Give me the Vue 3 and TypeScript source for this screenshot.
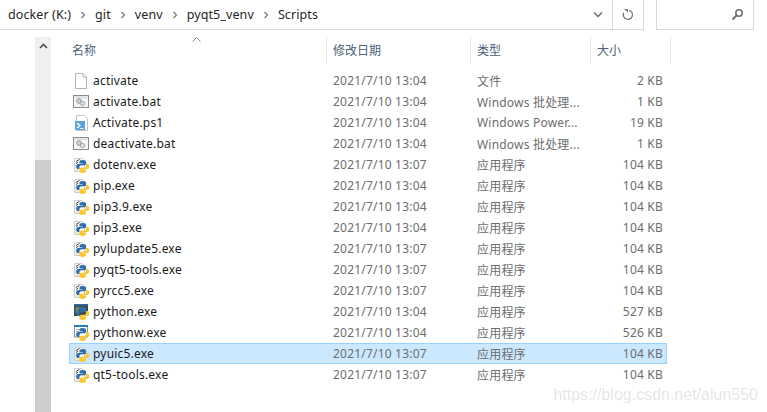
<script setup lang="ts">
type Kind = 'file' | 'bat' | 'ps1' | 'py' | 'python' | 'pythonw'

interface Row {
  name: string
  date: string
  type: string
  size: string
  kind: Kind
  selected?: boolean
}

const crumbs = ['docker (K:)', 'git', 'venv', 'pyqt5_venv', 'Scripts']

const rows: Row[] = [
  { name: 'activate', date: '2021/7/10 13:04', type: '文件', size: '2 KB', kind: 'file' },
  { name: 'activate.bat', date: '2021/7/10 13:04', type: 'Windows 批处理...', size: '1 KB', kind: 'bat' },
  { name: 'Activate.ps1', date: '2021/7/10 13:04', type: 'Windows Power...', size: '19 KB', kind: 'ps1' },
  { name: 'deactivate.bat', date: '2021/7/10 13:04', type: 'Windows 批处理...', size: '1 KB', kind: 'bat' },
  { name: 'dotenv.exe', date: '2021/7/10 13:07', type: '应用程序', size: '104 KB', kind: 'py' },
  { name: 'pip.exe', date: '2021/7/10 13:04', type: '应用程序', size: '104 KB', kind: 'py' },
  { name: 'pip3.9.exe', date: '2021/7/10 13:04', type: '应用程序', size: '104 KB', kind: 'py' },
  { name: 'pip3.exe', date: '2021/7/10 13:04', type: '应用程序', size: '104 KB', kind: 'py' },
  { name: 'pylupdate5.exe', date: '2021/7/10 13:07', type: '应用程序', size: '104 KB', kind: 'py' },
  { name: 'pyqt5-tools.exe', date: '2021/7/10 13:07', type: '应用程序', size: '104 KB', kind: 'py' },
  { name: 'pyrcc5.exe', date: '2021/7/10 13:07', type: '应用程序', size: '104 KB', kind: 'py' },
  { name: 'python.exe', date: '2021/7/10 13:04', type: '应用程序', size: '527 KB', kind: 'python' },
  { name: 'pythonw.exe', date: '2021/7/10 13:04', type: '应用程序', size: '526 KB', kind: 'pythonw' },
  { name: 'pyuic5.exe', date: '2021/7/10 13:07', type: '应用程序', size: '104 KB', kind: 'py', selected: true },
  { name: 'qt5-tools.exe', date: '2021/7/10 13:07', type: '应用程序', size: '104 KB', kind: 'py' },
]

const snake = 'M12 .5c-4.500 0-5.800 1.400-5.800 3.400v2.800H12v.9H4c-2.300 0-3.700 1.800-3.700 4.400s1.400 4.600 3.700 4.600h2.100v-3.100c0-2 1.700-3.700 3.800-3.700h5c1.800 0 3.200-1.500 3.200-3.200V3.900C18.100 2 16 .5 12 .5z'
</script>

<template>
  <div class="window">
    <div class="toolbar">
      <div class="address">
        <div class="crumbs">
          <template v-for="(crumb, i) in crumbs" :key="crumb">
            <span>{{ crumb }}</span>
            <svg v-if="i < crumbs.length - 1" class="sep" width="6" height="8" viewBox="0 0 6 8">
              <path d="M1.500 1l3 3-3 3" fill="none" stroke="#777" stroke-width="1.200" />
            </svg>
          </template>
        </div>
        <svg class="drop" width="10" height="7" viewBox="0 0 10 7">
          <path d="M1 1.500l4 4 4-4" fill="none" stroke="#6d6d6d" stroke-width="1.500" />
        </svg>
        <div class="refresh">
          <svg width="12" height="13" viewBox="0 0 12 13">
            <path d="M3 3.200A4.600 4.600 0 1 0 9 3.200" fill="none" stroke="#777" stroke-width="1.300" transform="rotate(-25 6 7)" />
            <path d="M2 1h4v3.600z" fill="#777" />
          </svg>
        </div>
      </div>
      <div class="search">
        <svg width="13" height="13" viewBox="0 0 13 13">
          <circle cx="8" cy="5" r="3.200" fill="none" stroke="#6d6d6d" stroke-width="1.500" />
          <path d="M5.600 7.400L1.500 11.500" stroke="#6d6d6d" stroke-width="2" />
        </svg>
      </div>
    </div>

    <div class="body">
      <div class="scrollbar">
        <svg class="up" width="9" height="6" viewBox="0 0 9 6">
          <path d="M1 5l3.500-3.500L8 5" fill="none" stroke="#505050" stroke-width="1.700" />
        </svg>
        <div class="thumb"></div>
      </div>

      <div class="list">
        <div class="head">
          <svg class="sort" width="9" height="5" viewBox="0 0 9 5">
            <path d="M.5 4.500l4-4 4 4" fill="none" stroke="#8a8a8a" />
          </svg>
          <div class="hcell c-name">名称</div>
          <div class="hcell c-date">修改日期</div>
          <div class="hcell c-type">类型</div>
          <div class="hcell c-size">大小</div>
        </div>

        <div class="rows">
          <div v-for="row in rows" :key="row.name" class="row" :class="{ selected: row.selected }">
            <div class="cell c-name name">
              <svg class="icon" width="16" height="16" viewBox="0 0 16 16">
                <template v-if="row.kind === 'file'">
                  <path d="M2.500.5h7.500l3.500 3.500v11.500h-11z" fill="#fff" stroke="#b4b4b4" />
                  <path d="M10 .5v3.500h3.500" fill="#f2f2f2" stroke="#b4b4b4" />
                </template>
                <template v-else-if="row.kind === 'bat'">
                  <rect x=".5" y="1.500" width="15" height="12" fill="#f4f4f4" stroke="#8c8c8c" />
                  <rect x="1.500" y="2.500" width="13" height="1.500" fill="#dcdcdc" />
                  <circle cx="6" cy="7" r="2.300" fill="#cfd4da" stroke="#8f98a3" />
                  <circle cx="9.500" cy="9.500" r="2.100" fill="#e2e5e8" stroke="#99a1aa" />
                </template>
                <template v-else-if="row.kind === 'ps1'">
                  <path d="M3.500.5h8l3 3v12h-11z" fill="#fff" stroke="#c4c4c4" />
                  <rect x="2" y="6" width="10" height="9" fill="#5aa3dc" />
                  <path d="M4 8l3 2.500L4 13" fill="none" stroke="#fff" stroke-width="1.200" />
                  <path d="M7 13.500h3.500" stroke="#e8f2fa" />
                </template>
                <template v-else>
                  <template v-if="row.kind === 'py'">
                    <path d="M1.500 1.500h8l2 2v11h-10z" fill="#f8f8f8" stroke="#cfcfcf" />
                    <path d="M3 4.500l3.500-2M3 6.500l2-1.200" stroke="#444" />
                    <path d="M2.500 9h2M2.500 11h2M2.500 13h3" stroke="#cfcfcf" />
                  </template>
                  <template v-else-if="row.kind === 'python'">
                    <rect x="1" y="0" width="14" height="12" fill="#3e4a52" />
                    <rect x="1" y="0" width="14" height="1.500" fill="#2a6da8" />
                    <path d="M2.500 4h4M2.500 6h3M2.500 8h3" stroke="#8fd08f" />
                  </template>
                  <template v-else>
                    <rect x="1.500" y=".5" width="13" height="11.500" fill="#fff" stroke="#8c8c8c" />
                    <rect x="1" y="0" width="14" height="2" fill="#2a7dbe" />
                    <path d="M3 4.500h4M3 6.500h3M3 8.500h3" stroke="#b0b0b0" />
                  </template>
                  <g transform="translate(3 2.800) scale(.56)">
                    <path :d="snake" fill="#2f6ea8" />
                    <path :d="snake" fill="#fcc72c" transform="rotate(180 12 12)" />
                  </g>
                </template>
              </svg>
              <span>{{ row.name }}</span>
            </div>
            <div class="cell c-date dim">{{ row.date }}</div>
            <div class="cell c-type dim">{{ row.type }}</div>
            <div class="cell c-size dim">{{ row.size }}</div>
          </div>
        </div>
      </div>
    </div>

    <div class="watermark">https://blog.csdn.net/alun550</div>
  </div>
</template>

<style scoped>
.window {
  position: relative;
  width: 767px;
  height: 412px;
  overflow: hidden;
  background: #fff;
  font-family: "Noto Sans", "Noto Sans CJK SC", sans-serif;
  font-size: 12px;
  color: #1a1a1a;
}

.toolbar {
  display: flex;
  height: 30px;
}

.address {
  display: flex;
  align-items: center;
  width: 644px;
  border-bottom: 1px solid #d9d9d9;
  border-right: 1px solid #d9d9d9;
  box-sizing: border-box;
}

.crumbs {
  display: flex;
  align-items: center;
  flex: 1;
  gap: 8px;
  padding-left: 8px;
  font-size: 12.5px;
  letter-spacing: 0.1px;
  color: #262626;
}

.sep {
  margin: 0 1px;
}

.drop {
  margin-right: 9px;
}

.refresh {
  display: flex;
  align-items: center;
  justify-content: center;
  width: 31px;
  height: 100%;
  border-left: 1px solid #d9d9d9;
  box-sizing: border-box;
}

.search {
  display: flex;
  align-items: center;
  justify-content: flex-end;
  width: 98px;
  margin-left: 12px;
  padding-right: 9px;
  border: 1px solid #d9d9d9;
  border-top: none;
  box-sizing: border-box;
}

.body {
  display: flex;
  padding: 7px 0 0 35px;
}

.scrollbar {
  position: relative;
  width: 16px;
  height: 375px;
  background: #f0f0f0;
}

.up {
  position: absolute;
  top: 6px;
  left: 4px;
}

.thumb {
  position: absolute;
  left: 0;
  right: 0;
  top: 123px;
  bottom: 0;
  background: #cdcdcd;
}

.list {
  flex: 1;
  padding-left: 18px;
}

.head {
  position: relative;
  display: flex;
  height: 27px;
  color: #4c607a;
}

.sort {
  position: absolute;
  left: 123px;
  top: 0;
}

.hcell {
  display: flex;
  align-items: center;
  box-sizing: border-box;
  border-right: 1px solid #e5e5e5;
  padding: 0 0 2px 3px;
  font-size: 12px;
}

.c-name {
  width: 258px;
}

.c-date {
  width: 144px;
}

.c-type {
  width: 120px;
}

.c-size {
  width: 80px;
}

.head .c-date,
.head .c-type,
.head .c-size {
  padding-left: 6px;
}

.rows {
  margin-top: 6px;
}

.row {
  display: flex;
  align-items: center;
  height: 21px;
  box-sizing: border-box;
  width: 598px;
  letter-spacing: 0.2px;
}

.row.selected {
  background: #cce8ff;
  outline: 1px solid #99d1ff;
  outline-offset: -1px;
}

.cell {
  box-sizing: border-box;
  white-space: nowrap;
}

.name {
  display: flex;
  align-items: center;
  gap: 4px;
  padding-left: 4px;
}

.icon {
  flex: none;
}

.dim {
  color: #6d6d6d;
  padding-left: 6px;
}

.row .c-size {
  width: 72px;
  text-align: right;
  padding: 0;
}

.watermark {
  position: absolute;
  right: 9px;
  top: 386px;
  font-family: "Liberation Sans", sans-serif;
  font-size: 16px;
  color: rgba(120, 120, 120, 0.2);
}
</style>
